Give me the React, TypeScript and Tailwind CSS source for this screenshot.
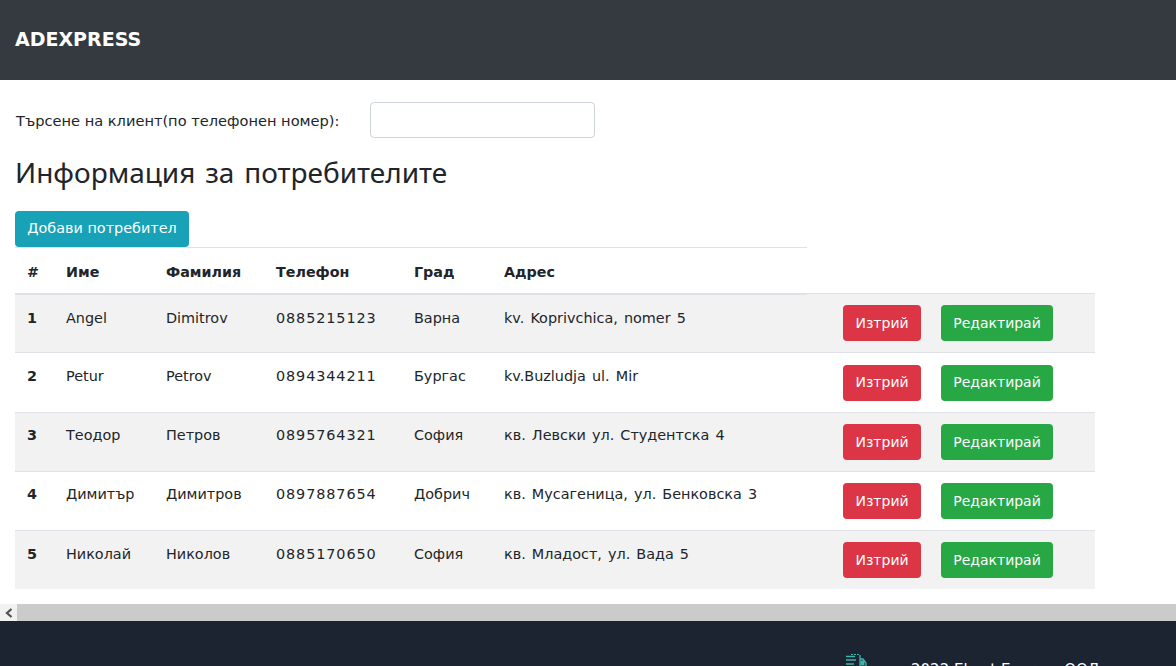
const rows = [
  ["1", "Angel", "Dimitrov", "0885215123", "Варна", "kv. Koprivchica, nomer 5"],
  ["2", "Petur", "Petrov", "0894344211", "Бургас", "kv.Buzludja ul. Mir"],
  ["3", "Теодор", "Петров", "0895764321", "София", "кв. Левски ул. Студентска 4"],
  ["4", "Димитър", "Димитров", "0897887654", "Добрич", "кв. Мусагеница, ул. Бенковска 3"],
  ["5", "Николай", "Николов", "0885170650", "София", "кв. Младост, ул. Вада 5"],
];
const heads = ["#", "Име", "Фамилия", "Телефон", "Град", "Адрес"];
const widths = ["w-[39px]", "w-[100px]", "w-[110px]", "w-[138px]", "w-[90px]", "w-[351px]"];
const rowHeights = ["h-[59px]", "h-[60px]", "h-[59px]", "h-[59px]", "h-[59px]"];
const rowPads = ["pb-[9px]", "pb-[11px]", "pb-[12px]", "pb-[12px]", "pb-[11px]"];

export default function App() {
  return (
    <div className="h-[666px] w-[1176px] overflow-hidden bg-white font-['DejaVu_Sans',sans-serif] text-[14px] text-[#212529]">
      <header className="flex h-[80px] items-center bg-[#343a40] pb-[2px] pl-[15px] text-[19px] font-bold text-white">ADEXPRESS</header>
      <div className="mt-[22px] flex h-[36px] items-center pl-[16px]">
        <label className="w-[354px] pt-[2px] text-[14.600px]">Търсене на клиент(по телефонен номер):</label>
        <input className="h-[36px] w-[225px] rounded border border-[#ced4da] bg-white" />
      </div>
      <h2 className="mt-[14px] h-[40px] pl-[15px] font-['Noto_Sans',sans-serif] text-[28px] leading-[40px] [word-spacing:2.500px]">Информация за потребителите</h2>
      <button className="mt-[19px] ml-[15px] block h-[36px] w-[174px] rounded bg-[#17a2b8] text-center text-[14.400px] text-white">Добави потребител</button>
      <div className="relative z-10 mb-[-2px] ml-[15px] flex h-[48px] w-[792px] items-center border-t border-b-2 border-[#dee2e6] pt-[4px] text-[14.300px] font-bold">
        {heads.map((h, i) => (
          <div key={h} className={`${widths[i]} shrink-0 pl-[12px]`}>{h}</div>
        ))}
      </div>
      <div className="ml-[15px] w-[1080px]">
        {rows.map((r, i) => (
          <div key={r[0]} className={`flex items-center border-t border-[#dee2e6] ${rowHeights[i]} ${i % 2 === 0 ? "bg-[#f2f2f2]" : "bg-white"}`}>
            {r.map((c, j) => (
              <div key={j} className={`${widths[j]} shrink-0 ${rowPads[i]} pl-[12px] text-[14.400px] ${j === 0 ? "font-bold" : ""} ${j === 3 ? "tracking-[0.900px]" : ""} ${j === 5 ? "[word-spacing:1.500px]" : ""}`}>{c}</div>
            ))}
            <button className="h-[36px] w-[78px] rounded bg-[#dc3545] text-center text-white">Изтрий</button>
            <button className="ml-[20px] h-[36px] w-[112px] rounded bg-[#28a745] text-center text-white">Редактирай</button>
          </div>
        ))}
      </div>
      <div className="mt-[15px] flex h-[17px] bg-[#cbcbcb]">
        <div className="flex h-[17px] w-[17px] items-center justify-center bg-[#f1f1f1]">
          <svg width="8" height="10" viewBox="0 0 8 10"><path d="M6.500 1 2 5l4.500 4" fill="none" stroke="#505050" strokeWidth="2.200" /></svg>
        </div>
      </div>
      <footer className="flex h-[60px] bg-[#1c2331] pl-[846px] pt-[32px]">
        <svg width="22" height="24" viewBox="0 0 22 24" className="shrink-0" fill="none" stroke="#3fb5ad">
          <path d="M5 1.500h9" strokeDasharray="2 1" strokeWidth="1.200" />
          <path d="M0 3.500h9M0 7h10M0 11h8" strokeWidth="1.300" />
          <path d="M14 2v12H6M14 6h3l3 4v4h-6" strokeWidth="1.300" />
          <rect x="15" y="8" width="3" height="4" fill="#3fb5ad" />
        </svg>
        <span className="ml-[43px] mt-[6px] whitespace-nowrap text-[15px] text-white">2022 Ekont Express ООД</span>
      </footer>
    </div>
  );
}
